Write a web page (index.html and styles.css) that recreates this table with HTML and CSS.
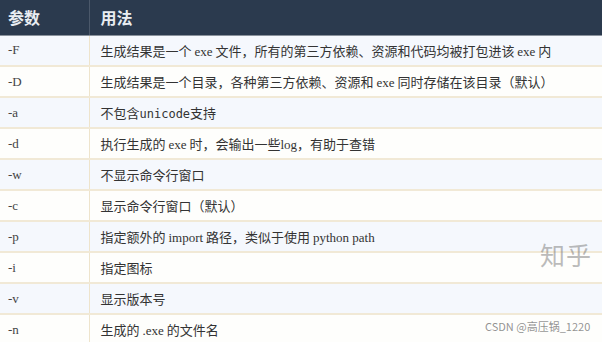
FILE: index.html
```html
<!DOCTYPE html>
<html lang="zh">
<head>
    <meta charset="UTF-8">
    <title>pyinstaller 参数</title>
    <link rel="stylesheet" href="styles.css">
</head>
<body>

    <!-- Options table -->
    <table class="opts">
        <thead>
            <tr>
                <th class="col-key">参数</th>
                <th>用法</th>
            </tr>
        </thead>
        <tbody>
            <tr><td class="col-key">-F</td><td>生成结果是一个 <span class="lat">exe</span> 文件，所有的第三方依赖、资源和代码均被打包进该 <span class="lat">exe</span> 内</td></tr>
            <tr><td class="col-key">-D</td><td>生成结果是一个目录，各种第三方依赖、资源和 <span class="lat">exe</span> 同时存储在该目录（默认）</td></tr>
            <tr><td class="col-key">-a</td><td>不包含<span class="mono">unicode</span>支持</td></tr>
            <tr><td class="col-key">-d</td><td>执行生成的 <span class="lat">exe</span> 时，会输出一些<span class="lat">log</span>，有助于查错</td></tr>
            <tr><td class="col-key">-w</td><td>不显示命令行窗口</td></tr>
            <tr><td class="col-key">-c</td><td>显示命令行窗口（默认）</td></tr>
            <tr><td class="col-key">-p</td><td>指定额外的 <span class="lat">import</span> 路径，类似于使用 <span class="lat">python path</span></td></tr>
            <tr><td class="col-key">-i</td><td>指定图标</td></tr>
            <tr><td class="col-key">-v</td><td>显示版本号</td></tr>
            <tr><td class="col-key">-n</td><td>生成的 <span class="lat">.exe</span> 的文件名</td></tr>
        </tbody>
    </table>

    <!-- Watermarks -->
    <div class="mark-zh">知乎</div>
    <div class="mark-csdn">CSDN @高压锅_1220</div>

</body>
</html>
```

FILE: styles.css
```css
/* General */
body {
    margin: 0;
    width: 602px;
    height: 342px;
    overflow: hidden;
    position: relative;
    background: #ffffff;
    font-family: "Noto Sans CJK SC", "Liberation Serif", serif;
}

/* Table */
.opts {
    width: 602px;
    border-collapse: collapse;
    table-layout: fixed;
}

.opts th {
    background: #2b3a4e;
    color: #e9edf2;
    height: 35px;
    padding: 0 0 0 11px;
    text-align: left;
    font-size: 16px;
    font-weight: bold;
    border-right: 1px solid #4b586a;
    border-bottom: 1px solid #8a929c;
    box-sizing: border-box;
}

.opts th:last-child {
    border-right: none;
}

.opts td {
    height: 31px;
    padding: 0 0 0 11px;
    font-size: 13px;
    color: #333333;
    border-bottom: 2px solid #f1e9d6;
    border-right: 1px solid #eee4cc;
    box-sizing: border-box;
    white-space: nowrap;
}

.opts td:last-child {
    border-right: none;
}

.opts .col-key {
    width: 89px;
    padding-left: 8px;
    font-family: "Liberation Serif", serif;
    font-size: 13px;
    color: #444444;
}

.opts th.col-key {
    font-family: "Noto Sans CJK SC", sans-serif;
    font-size: 16px;
    color: #e9edf2;
}

.opts tbody tr:nth-child(odd) {
    background: #f5f8fd;
}

.opts tbody tr:nth-child(even) {
    background: #fefefc;
}

.lat {
    font-family: "Liberation Serif", serif;
    font-size: 13px;
}

.mono {
    font-family: "DejaVu Sans Mono", monospace;
    font-size: 12px;
}

/* Watermarks */
.mark-zh {
    position: absolute;
    left: 540px;
    top: 236px;
    font-size: 25px;
    color: rgba(120, 120, 120, 0.5);
    font-family: "Noto Sans CJK SC", sans-serif;
    letter-spacing: 1px;
}

.mark-csdn {
    position: absolute;
    left: 485px;
    top: 318px;
    font-size: 11px;
    color: rgba(110, 110, 110, 0.75);
    font-family: "Noto Sans CJK SC", "DejaVu Sans", sans-serif;
}
```
